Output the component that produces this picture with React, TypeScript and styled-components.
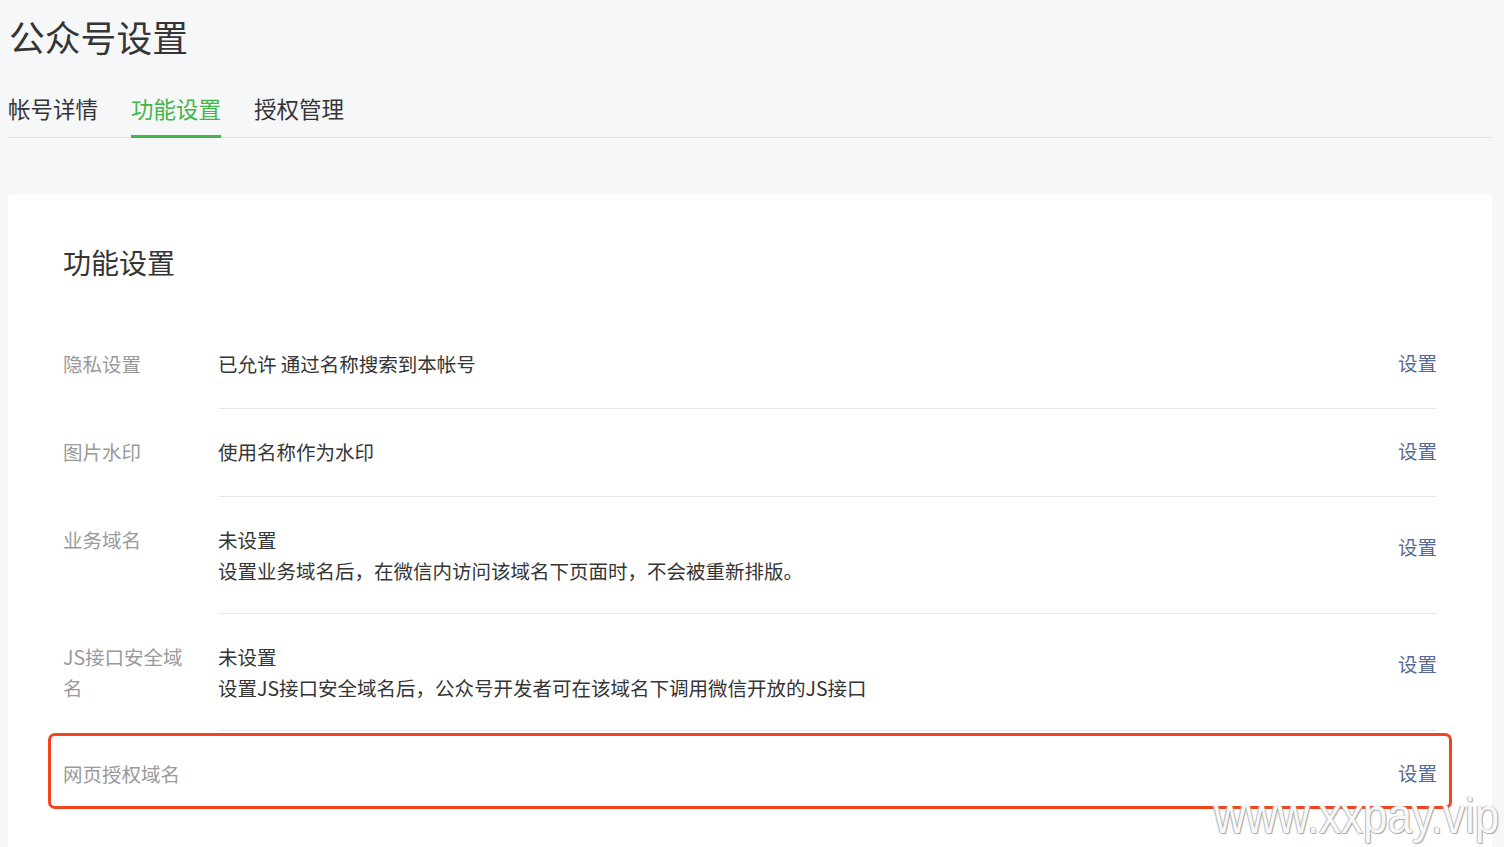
import React from "react";
import styled, { createGlobalStyle } from "styled-components";

const GlobalStyle = createGlobalStyle`
  html, body {
    margin: 0;
    padding: 0;
    background: #f6f7f9;
    font-family: "Noto Sans CJK SC", "Noto Sans", sans-serif;
    color: #353535;
  }
  * { box-sizing: border-box; }
`;

const Page = styled.div`
  position: relative;
  height: 847px;
  overflow: hidden;
  padding: 12px 12px 0 8px;
`;

const PageTitle = styled.h1`
  margin: 0 0 0 1px;
  font-size: 35.8px;
  font-weight: 400;
  line-height: 48px;
  color: #353535;
`;

const TabBar = styled.nav`
  display: flex;
  gap: 33px;
  margin-top: 33px;
  border-bottom: 1px solid #e1e3e6;
`;

const Tab = styled.div<{ $active?: boolean }>`
  font-size: 22.5px;
  line-height: 31px;
  padding-bottom: 11px;
  margin-bottom: -1px;
  color: ${(p) => (p.$active ? "#44b549" : "#353535")};
  border-bottom: 3px solid ${(p) => (p.$active ? "#44b549" : "transparent")};
`;

const Card = styled.section`
  margin-top: 56px;
  background: #fff;
  border-radius: 4px;
  padding: 48px 55px 80px 55px;
`;

const CardTitle = styled.h2`
  margin: 0 0 39px 0;
  font-size: 28px;
  font-weight: 400;
  line-height: 40px;
  color: #353535;
`;

const Row = styled.div`
  position: relative;
  display: grid;
  grid-template-columns: 155px 1fr auto;
  font-size: 19.5px;
  line-height: 31px;
`;

const Label = styled.div`
  width: 128px;
  padding: 27px 0;
  color: #9a9a9a;
`;

const Value = styled.div<{ $last?: boolean }>`
  grid-column: 2 / 4;
  grid-row: 1;
  min-height: 88px;
  padding: 27px 0;
  color: #353535;
  border-bottom: 1px solid ${(p) => (p.$last ? "transparent" : "#e7e7eb")};
`;

const Action = styled.a<{ $multi?: boolean }>`
  grid-column: 3;
  grid-row: 1;
  align-self: center;
  margin-top: ${(p) => (p.$multi ? "-18px" : "-6px")};
  color: #576b95;
  text-decoration: none;
  cursor: pointer;
`;

const Highlight = styled.div`
  position: absolute;
  top: 2px;
  left: -15px;
  right: -15px;
  height: 76px;
  border: 3px solid #f2441f;
  border-radius: 7px;
  pointer-events: none;
`;

const Watermark = styled.div`
  position: absolute;
  left: 1214px;
  top: 791px;
  font-family: "Liberation Sans", Arial, sans-serif;
  font-size: 50px;
  line-height: 50px;
  color: #f8f8f8;
  text-shadow: 0 0 1px #8f8f8f, 1px 1px 1px #a8a8a8, -1px 0 1px #c0c0c0;
  transform: scaleX(0.88);
  transform-origin: left center;
  white-space: nowrap;
  pointer-events: none;
`;

type Setting = {
  label: string;
  lines: string[];
  highlighted?: boolean;
};

const settings: Setting[] = [
  { label: "隐私设置", lines: ["已允许 通过名称搜索到本帐号"] },
  { label: "图片水印", lines: ["使用名称作为水印"] },
  {
    label: "业务域名",
    lines: ["未设置", "设置业务域名后，在微信内访问该域名下页面时，不会被重新排版。"],
  },
  {
    label: "JS接口安全域名",
    lines: ["未设置", "设置JS接口安全域名后，公众号开发者可在该域名下调用微信开放的JS接口"],
  },
  { label: "网页授权域名", lines: [], highlighted: true },
];

export default function App() {
  return (
    <>
      <GlobalStyle />
      <Page>
        <PageTitle>公众号设置</PageTitle>
        <TabBar>
          <Tab>帐号详情</Tab>
          <Tab $active>功能设置</Tab>
          <Tab>授权管理</Tab>
        </TabBar>
        <Card>
          <CardTitle>功能设置</CardTitle>
          {settings.map((s, i) => {
            const last = i === settings.length - 1;
            return (
              <Row key={s.label}>
                <Label>{s.label}</Label>
                <Value $last={last}>
                  {s.lines.map((l) => (
                    <div key={l}>{l}</div>
                  ))}
                </Value>
                <Action $multi={s.lines.length > 1}>设置</Action>
                {s.highlighted && <Highlight />}
              </Row>
            );
          })}
        </Card>
        <Watermark>www.xxpay.vip</Watermark>
      </Page>
    </>
  );
}
